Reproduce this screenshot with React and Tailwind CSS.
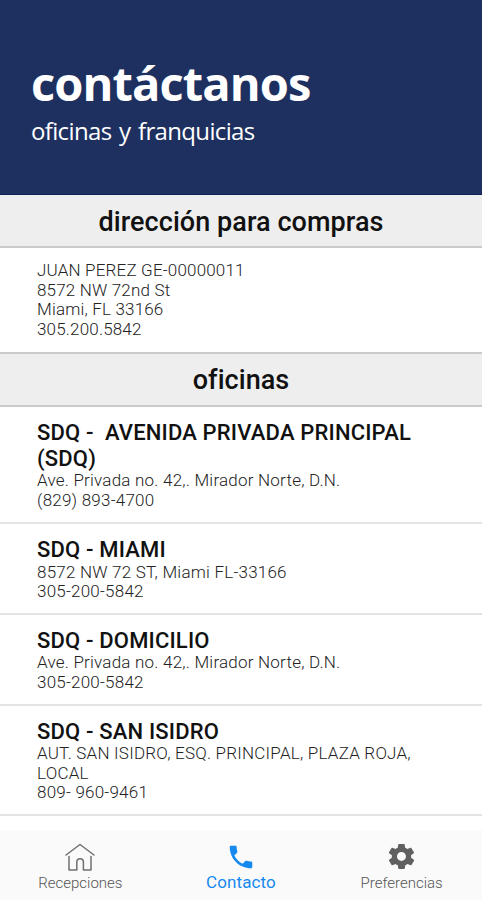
import React from "react";
import { IoMdCall, IoMdSettings } from "react-icons/io";

const offices = [
  { name: "SDQ -  AVENIDA PRIVADA PRINCIPAL (SDQ)", lines: ["Ave. Privada no. 42,. Mirador Norte, D.N.", "(829) 893-4700"], h: "h-[117px]" },
  { name: "SDQ - MIAMI", lines: ["8572 NW 72 ST, Miami FL-33166", "305-200-5842"], h: "h-[90.500px]" },
  { name: "SDQ - DOMICILIO", lines: ["Ave. Privada no. 42,. Mirador Norte, D.N.", "305-200-5842"], h: "h-[91px]" },
  { name: "SDQ - SAN ISIDRO", lines: ["AUT. SAN ISIDRO, ESQ. PRINCIPAL, PLAZA ROJA, LOCAL", "809- 960-9461"], h: "h-[110.500px]" },
];

function SectionTitle({ className, children }) {
  return (
    <h2 className={`flex items-center justify-center border-b-2 border-[#cbcbcb] bg-[#eeeeee] text-[27px] font-medium tracking-[0.06px] text-[#111] ${className}`}>
      {children}
    </h2>
  );
}

export default function App() {
  return (
    <div className="flex h-[900px] w-[482px] flex-col overflow-hidden bg-white font-[Roboto,sans-serif] text-[#222]">
      <header className="h-[195px] shrink-0 border-b border-[#0b2059] bg-[#1e305f] pl-[31px] pt-[51px] font-['Open_Sans',sans-serif] text-white">
        <h1 className="text-[47px] font-bold leading-[64px] tracking-[-0.9px]">contáctanos</h1>
        <p className="text-[24px] leading-[32px] tracking-[-0.65px] [word-spacing:2px]">oficinas y franquicias</p>
      </header>
      <main className="min-h-0 flex-1 overflow-hidden">
        <SectionTitle className="h-[53px] pt-[3px]">dirección para compras</SectionTitle>
        <address className="h-[104px] pl-[37px] pt-[13px] text-[17px] font-light not-italic leading-[19.7px] tracking-[0.18px]">
          <p>JUAN PEREZ GE-00000011</p>
          <p>8572 NW 72nd St</p>
          <p>Miami, FL 33166</p>
          <p>305.200.5842</p>
        </address>
        <SectionTitle className="h-[55px] border-t-2 pt-[2px]">oficinas</SectionTitle>
        {offices.map((o) => (
          <section key={o.name} className={`border-b-2 border-[#e4e4e4] pl-[37px] pr-[60px] pt-[13px] ${o.h}`}>
            <h3 className="whitespace-pre-wrap text-[22px] font-medium leading-[25.6px] tracking-[0.17px] text-[#111]">{o.name}</h3>
            {o.lines.map((l) => (
              <p key={l} className="text-[17px] font-light leading-[19.6px] tracking-[0.22px]">{l}</p>
            ))}
          </section>
        ))}
      </main>
      <nav className="grid h-[70px] shrink-0 grid-cols-3 bg-[#fafafa] text-[15px] font-light leading-[22px] text-[#555]">
        <div className="flex flex-col items-center pt-[12px]">
          <svg width="32" height="30" viewBox="0 0 32 30" fill="none" stroke="#707070" strokeWidth="1.5" strokeLinecap="round" strokeLinejoin="round"><path d="M2 13 16 2.500 30 13M5 14.500V28H12.800V20a3.300 3.300 0 0 1 6.600 0V28H27V14.500" /></svg>
          <span>Recepciones</span>
        </div>
        <div className="flex flex-col items-center pt-[12px] text-[#1689ee]">
          <IoMdCall className="size-[30px]" />
          <span className="-mt-px text-[17px] font-normal tracking-[0.1px]">Contacto</span>
        </div>
        <div className="flex flex-col items-center pt-[11px]">
          <IoMdSettings className="size-[31px] text-[#606060]" />
          <span>Preferencias</span>
        </div>
      </nav>
    </div>
  );
}
